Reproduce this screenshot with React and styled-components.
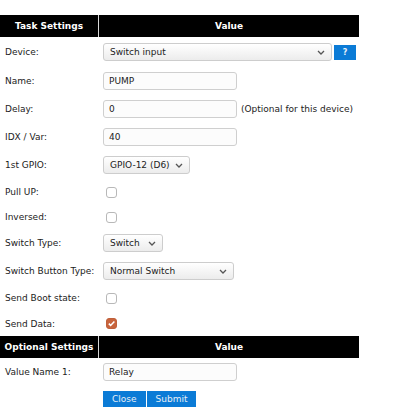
import React from 'react'
import styled, { createGlobalStyle } from 'styled-components'

const textColor = '#222'
const blue = '#0b7bd6'

const GlobalStyle = createGlobalStyle`
  body {
    margin: 0;
    background: #ffffff;
    font-family: "DejaVu Sans", Verdana, sans-serif;
    font-size: 9px;
    color: ${textColor};
  }
`

const Page = styled.div`
  padding-top: 15px;
  width: 359px;
`

const HeaderRow = styled.div`
  display: grid;
  grid-template-columns: 98px 260px;
  column-gap: 1px;
  background: #d8d8d8;
  height: 22px;
`

const HeaderCell = styled.div`
  background: #000;
  color: #fff;
  font-weight: bold;
  display: flex;
  align-items: center;
  justify-content: center;
`

const Row = styled.div`
  display: grid;
  grid-template-columns: 99px 1fr;
  align-items: center;
  height: ${({ h }) => h || 28}px;
`

const Label = styled.div`
  padding-left: 5px;
  white-space: nowrap;
`

const Value = styled.div`
  display: flex;
  align-items: center;
  padding-left: 4px;
`

const Input = styled.div`
  box-sizing: border-box;
  width: ${({ w }) => w || 134}px;
  height: 18px;
  border: 1px solid #cfcfcf;
  border-radius: 3px;
  background: #fcfcfc;
  padding-left: 5px;
  display: flex;
  align-items: center;
`

const Note = styled.span`
  margin-left: 4px;
`

const Select = styled.div`
  box-sizing: border-box;
  width: ${({ w }) => w}px;
  height: 18px;
  border: 1px solid #cdcdcd;
  border-radius: 3px;
  background: linear-gradient(#ffffff, #ececec);
  padding: 0 6px 0 6px;
  display: flex;
  align-items: center;
  justify-content: space-between;
`

const HelpButton = styled.div`
  width: 22px;
  height: 15px;
  margin-left: 2px;
  background: ${blue};
  color: #e8f0f8;
  font-weight: bold;
  font-size: 8px;
  display: flex;
  align-items: center;
  justify-content: center;
`

const Checkbox = styled.div`
  box-sizing: border-box;
  width: 11px;
  height: 11px;
  margin-left: 3px;
  border-radius: 3px;
  border: 1px solid ${({ checked }) => (checked ? '#c0603a' : '#b8b8b8')};
  background: ${({ checked }) => (checked ? '#c8643d' : '#fff')};
  display: flex;
  align-items: center;
  justify-content: center;
`

const Buttons = styled.div`
  display: flex;
  gap: 1px;
  padding-left: 103px;
  margin-top: 5px;
`

const Button = styled.div`
  height: 16px;
  padding: 0 9px;
  background: ${blue};
  color: #e6eef6;
  display: flex;
  align-items: center;
`

function Chevron() {
  return (
    <svg width="8" height="5" viewBox="0 0 8 5">
      <path d="M1 1l3 3 3-3" fill="none" stroke="#555" strokeWidth="1.3" />
    </svg>
  )
}

function Check() {
  return (
    <svg width="9" height="9" viewBox="0 0 9 9">
      <path d="M1.8 4.6l1.8 1.8 3.8-4" fill="none" stroke="#fff" strokeWidth="1.5" />
    </svg>
  )
}

function SelectField({ w, children }) {
  return (
    <Select w={w}>
      <span>{children}</span>
      <Chevron />
    </Select>
  )
}

export default function App() {
  return (
    <Page>
      <GlobalStyle />
      <HeaderRow>
        <HeaderCell>Task Settings</HeaderCell>
        <HeaderCell>Value</HeaderCell>
      </HeaderRow>
      <Row h={30}>
        <Label>Device:</Label>
        <Value>
          <SelectField w={229}>Switch input</SelectField>
          <HelpButton>?</HelpButton>
        </Value>
      </Row>
      <Row>
        <Label>Name:</Label>
        <Value><Input>PUMP</Input></Value>
      </Row>
      <Row>
        <Label>Delay:</Label>
        <Value>
          <Input>0</Input>
          <Note>(Optional for this device)</Note>
        </Value>
      </Row>
      <Row>
        <Label>IDX / Var:</Label>
        <Value><Input>40</Input></Value>
      </Row>
      <Row>
        <Label>1st GPIO:</Label>
        <Value><SelectField w={87}>GPIO-12 (D6)</SelectField></Value>
      </Row>
      <Row h={26}>
        <Label>Pull UP:</Label>
        <Value><Checkbox /></Value>
      </Row>
      <Row h={24}>
        <Label>Inversed:</Label>
        <Value><Checkbox /></Value>
      </Row>
      <Row>
        <Label>Switch Type:</Label>
        <Value><SelectField w={60}>Switch</SelectField></Value>
      </Row>
      <Row>
        <Label>Switch Button Type:</Label>
        <Value><SelectField w={131}>Normal Switch</SelectField></Value>
      </Row>
      <Row h={26}>
        <Label>Send Boot state:</Label>
        <Value><Checkbox /></Value>
      </Row>
      <Row h={25}>
        <Label>Send Data:</Label>
        <Value><Checkbox checked><Check /></Checkbox></Value>
      </Row>
      <HeaderRow>
        <HeaderCell>Optional Settings</HeaderCell>
        <HeaderCell>Value</HeaderCell>
      </HeaderRow>
      <Row>
        <Label>Value Name 1:</Label>
        <Value><Input>Relay</Input></Value>
      </Row>
      <Buttons>
        <Button>Close</Button>
        <Button>Submit</Button>
      </Buttons>
    </Page>
  )
}
